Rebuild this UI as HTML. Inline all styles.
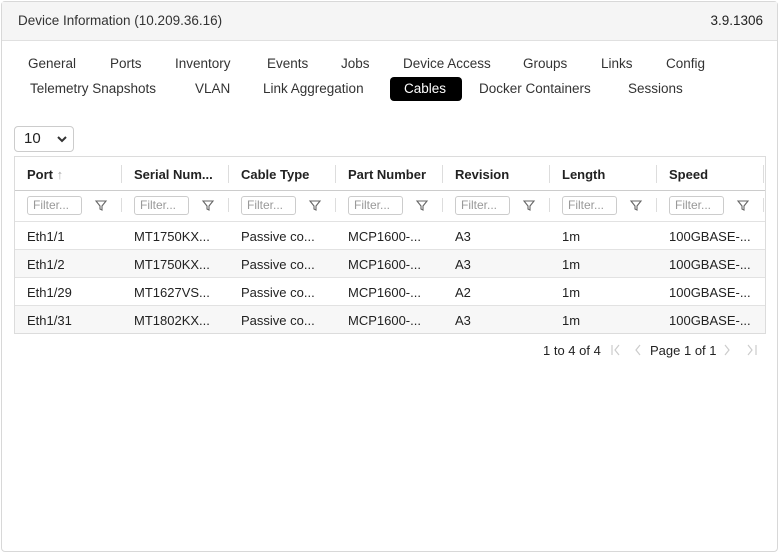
<!DOCTYPE html><html><head><style>
body{margin:0;width:779px;height:552px;background:#fff;font-family:"Liberation Sans",sans-serif;color:#222;position:relative;overflow:hidden}
.card{position:absolute;left:1px;top:1px;width:775px;height:549px;border:1px solid #d8d8d8;border-radius:4px}
.hd{position:absolute;left:0;top:0;width:775px;height:38px;background:#f5f5f5;border-bottom:1px solid #e0e0e0;font-size:13.5px}
.t{position:absolute;font-size:13.5px;color:#333;white-space:nowrap}
.a{position:absolute;white-space:nowrap}
.sel{position:absolute;left:14px;top:126px;width:58px;height:24px;border:1px solid #ccc;border-radius:4px;font-size:15px}
.grid{position:absolute;left:14px;top:156px;width:750px;height:176px;border:1px solid #dcdcdc;overflow:hidden}
.row{position:absolute;left:0;width:750px;height:28px;border-top:1px solid #e2e2e2;font-size:13px}
.c{position:absolute;top:7px}
.h{font-weight:bold;font-size:13px}
.f{position:absolute;width:53px;height:17px;border:1px solid #ccc;border-radius:3px;font-size:12px;color:#999;line-height:17px;padding-left:5px;box-sizing:border-box;width:55px;height:19px}
.sep{position:absolute;width:1px;background:#ddd}
</style></head><body>
<div class="card">
<div class="hd"><span class="a" style="left:16px;top:11px;color:#333">Device Information (10.209.36.16)</span><span class="a" style="right:14px;top:11px">3.9.1306</span></div>
</div>
<span class="t" style="left:28px;top:56px">General</span>
<span class="t" style="left:110px;top:56px">Ports</span>
<span class="t" style="left:175px;top:56px">Inventory</span>
<span class="t" style="left:267px;top:56px">Events</span>
<span class="t" style="left:341px;top:56px">Jobs</span>
<span class="t" style="left:403px;top:56px">Device Access</span>
<span class="t" style="left:523px;top:56px">Groups</span>
<span class="t" style="left:601px;top:56px">Links</span>
<span class="t" style="left:666px;top:56px">Config</span>
<span class="t" style="left:30px;top:81px">Telemetry Snapshots</span>
<span class="t" style="left:195px;top:81px">VLAN</span>
<span class="t" style="left:263px;top:81px">Link Aggregation</span>
<div style="position:absolute;left:390px;top:77px;width:72px;height:24px;background:#000;border-radius:4px"></div>
<span class="t" style="left:404px;top:81px;color:#fff">Cables</span>
<span class="t" style="left:479px;top:81px">Docker Containers</span>
<span class="t" style="left:628px;top:81px">Sessions</span>
<div class="sel"><span class="a" style="left:9px;top:3px">10</span><svg style="position:absolute;left:42px;top:9px" width="10" height="7"><path d="M1 1L5 5L9 1" stroke="#333" stroke-width="2" fill="none"/></svg></div>
<div class="grid">
<div class="row" style="top:0;height:33px;border:0;border-bottom:1px solid #ccc">
<span class="c h" style="left:12px;top:10px">Port <span style="color:#aaa;font-weight:normal">↑</span></span>
<span class="c h" style="left:119px;top:10px">Serial Num...</span>
<span class="c h" style="left:226px;top:10px">Cable Type</span>
<span class="c h" style="left:333px;top:10px">Part Number</span>
<span class="c h" style="left:440px;top:10px">Revision</span>
<span class="c h" style="left:547px;top:10px">Length</span>
<span class="c h" style="left:654px;top:10px">Speed</span>
</div>
<div class="row" style="top:34px;height:30px;border:0">
</div>
<div class="row" style="top:64px"><span class="c" style="left:12px">Eth1/1</span><span class="c" style="left:119px">MT1750KX...</span><span class="c" style="left:226px">Passive co...</span><span class="c" style="left:333px">MCP1600-...</span><span class="c" style="left:440px">A3</span><span class="c" style="left:547px">1m</span><span class="c" style="left:654px">100GBASE-...</span></div>
<div class="row" style="top:92px;background:#f7f7f7"><span class="c" style="left:12px">Eth1/2</span><span class="c" style="left:119px">MT1750KX...</span><span class="c" style="left:226px">Passive co...</span><span class="c" style="left:333px">MCP1600-...</span><span class="c" style="left:440px">A3</span><span class="c" style="left:547px">1m</span><span class="c" style="left:654px">100GBASE-...</span></div>
<div class="row" style="top:120px"><span class="c" style="left:12px">Eth1/29</span><span class="c" style="left:119px">MT1627VS...</span><span class="c" style="left:226px">Passive co...</span><span class="c" style="left:333px">MCP1600-...</span><span class="c" style="left:440px">A2</span><span class="c" style="left:547px">1m</span><span class="c" style="left:654px">100GBASE-...</span></div>
<div class="row" style="top:148px;background:#f7f7f7"><span class="c" style="left:12px">Eth1/31</span><span class="c" style="left:119px">MT1802KX...</span><span class="c" style="left:226px">Passive co...</span><span class="c" style="left:333px">MCP1600-...</span><span class="c" style="left:440px">A3</span><span class="c" style="left:547px">1m</span><span class="c" style="left:654px">100GBASE-...</span></div>
</div>
<div id="filters"></div>
<script></script>
<div style="position:absolute;left:0;top:0">
<!-- filters -->
<div class="f" style="left:27px;top:196px">Filter...</div><div class="f" style="left:134px;top:196px">Filter...</div><div class="f" style="left:241px;top:196px">Filter...</div><div class="f" style="left:348px;top:196px">Filter...</div><div class="f" style="left:455px;top:196px">Filter...</div><div class="f" style="left:562px;top:196px">Filter...</div><div class="f" style="left:669px;top:196px">Filter...</div>
<svg style="position:absolute;left:0;top:0" width="779" height="552">
<g stroke="#666" fill="none" stroke-width="1.1">
<path d="M96 201h10l-4 5v4l-2-1v-3z"/><path d="M203 201h10l-4 5v4l-2-1v-3z"/><path d="M310 201h10l-4 5v4l-2-1v-3z"/><path d="M417 201h10l-4 5v4l-2-1v-3z"/><path d="M524 201h10l-4 5v4l-2-1v-3z"/><path d="M631 201h10l-4 5v4l-2-1v-3z"/><path d="M738 201h10l-4 5v4l-2-1v-3z"/>
</g>
<g stroke="#ddd"><path d="M121.5 165v18M228.5 165v18M335.5 165v18M442.5 165v18M549.5 165v18M656.5 165v18M763.5 165v18M121.5 198v14M228.5 198v14M335.5 198v14M442.5 198v14M549.5 198v14M656.5 198v14M763.5 198v14"/></g>
<g stroke="#ccc" fill="none" stroke-width="1.2"><path d="M612 345v10M619 345l-4 5l4 5M640 345l-4 5l4 5M725 345l4 5l-4 5M748 345l4 5l-4 5M756 345v10"/></g>
</svg>
</div>
<span class="a" style="left:543px;top:343px;font-size:13px">1 to 4 of 4</span>
<span class="a" style="left:650px;top:343px;font-size:13px">Page 1 of 1</span>
</body></html>
